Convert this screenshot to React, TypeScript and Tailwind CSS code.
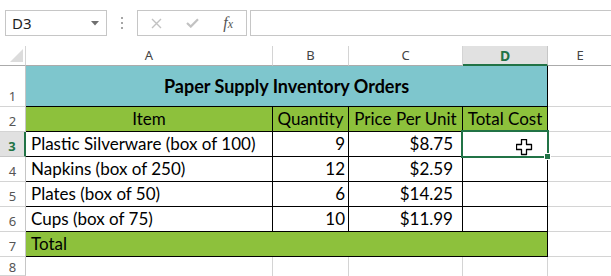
import React from "react";

const G = "border-[#d4d4d4]";

function RowHead({ n, h, pt, sel }: { n: string; h: string; pt: string; sel?: boolean }) {
  return (
    <div
      className={
        "box-border flex w-[26px] shrink-0 items-start justify-center border-b font-['Noto_Sans',sans-serif] text-[13px] leading-[14px] " +
        h +
        " " +
        pt +
        (sel
          ? " border-r-2 border-r-[#217346] border-b-[#c6c6c6] bg-[#e1e1e1] font-bold text-[#217346]"
          : " border-r border-r-[#c6c6c6] border-b-[#d4d4d4] text-[#555]")
      }
    >
      {n}
    </div>
  );
}

function DataRow({
  n,
  item,
  qty,
  price,
  sel,
}: {
  n: string;
  item: string;
  qty: string;
  price: string;
  sel?: boolean;
}) {
  return (
    <div className="flex h-[25px]">
      <RowHead n={n} h="h-[25px]" pt="pt-[7px]" sel={sel} />
      <div className="box-border flex w-[247px] shrink-0 items-end border-r border-b border-black pl-[5px] pb-[1px] text-[17px] leading-[22px]">
        {item}
      </div>
      <div className="box-border flex w-[76px] shrink-0 items-end justify-end border-r border-b border-black pr-[3px] pb-[1px] text-[17px] leading-[22px]">
        {qty}
      </div>
      <div className="box-border flex w-[114px] shrink-0 items-end justify-end border-r border-b border-black pr-[9px] pb-[1px] text-[17px] leading-[22px]">
        {price}
      </div>
      <div className="box-border w-[85px] shrink-0 border-r border-b border-black" />
      <div className={"box-border flex-1 border-b " + G} />
    </div>
  );
}

export default function App() {
  return (
    <div className="relative h-[276px] w-[611px] overflow-hidden bg-white font-['Lato',sans-serif] text-black">
      {/* Toolbar */}
      <div className="flex h-[46px] items-start pt-[10px] pl-[5px]">
        <div className="box-border flex h-[26px] w-[102px] shrink-0 items-center justify-between border border-[#c6c6c6] pl-[6px] pr-[7px]">
          <span className="font-['Noto_Sans',sans-serif] text-[15px] leading-none text-[#1e1e1e]">D3</span>
          <svg width="8" height="5" viewBox="0 0 8 5">
            <polygon points="0,0 8,0 4,4.5" fill="#6f6f6f" />
          </svg>
        </div>
        <div className="ml-[13px] flex h-[26px] w-[3px] shrink-0 flex-col items-center justify-center gap-[3px]">
          <div className="h-[2px] w-[2px] bg-[#a6a6a6]" />
          <div className="h-[2px] w-[2px] bg-[#a6a6a6]" />
          <div className="h-[2px] w-[2px] bg-[#a6a6a6]" />
        </div>
        <div className="ml-[14px] box-border flex h-[26px] w-[110px] shrink-0 items-center border border-[#c6c6c6] pl-[1px]">
          <div className="flex w-[36px] justify-center">
            <svg width="11" height="11" viewBox="0 0 11 11">
              <path d="M1 1 L10 10 M10 1 L1 10" stroke="#c2c2c2" strokeWidth="1.4" />
            </svg>
          </div>
          <div className="flex w-[36px] justify-center">
            <svg width="13" height="10" viewBox="0 0 13 10">
              <path d="M1 5 L4.8 8.6 L12 1.2" stroke="#c2c2c2" strokeWidth="2.2" fill="none" />
            </svg>
          </div>
          <div className="flex w-[36px] justify-center">
            <span className="font-['Liberation_Serif',serif] text-[16px] italic leading-none text-[#555]">
              f<span className="text-[12px]">x</span>
            </span>
          </div>
        </div>
        <div className="ml-[3px] box-border h-[26px] w-[400px] shrink-0 border border-[#c6c6c6]" />
      </div>

      {/* Column headers */}
      <div className="flex h-[20px] font-['Noto_Sans',sans-serif] text-[13px] text-[#444]">
        <div className="relative box-border h-[20px] w-[26px] shrink-0 border-r border-b border-r-[#d4d4d4] border-b-[#ababab]">
          <svg className="absolute left-[10px] top-[3px]" width="13" height="13" viewBox="0 0 13 13">
            <polygon points="13,0 13,13 0,13" fill="#dcdcdc" />
          </svg>
        </div>
        <div className="box-border flex h-[20px] w-[247px] shrink-0 items-center justify-center border-r border-b border-r-[#d4d4d4] border-b-[#ababab]">
          A
        </div>
        <div className="box-border flex h-[20px] w-[76px] shrink-0 items-center justify-center border-r border-b border-r-[#d4d4d4] border-b-[#ababab]">
          B
        </div>
        <div className="box-border flex h-[20px] w-[114px] shrink-0 items-center justify-center border-r border-b border-r-[#d4d4d4] border-b-[#ababab]">
          C
        </div>
        <div className="box-border flex h-[20px] w-[85px] shrink-0 items-center justify-center border-r border-b-2 border-r-[#c6c6c6] border-b-[#217346] bg-[#e1e1e1] text-[14px] font-bold text-[#217346]">
          D
        </div>
        <div className="box-border flex h-[20px] w-[64px] shrink-0 items-center justify-center border-b border-b-[#ababab]">
          E
        </div>
      </div>

      {/* Row 1 */}
      <div className="flex h-[41px]">
        <RowHead n="1" h="h-[41px]" pt="pt-[23px]" />
        <div className="box-border flex w-[522px] shrink-0 items-center justify-center border-r border-b border-black bg-[#7ec6cd] pt-[1px] text-[18px] font-bold">
          Paper Supply Inventory Orders
        </div>
        <div className={"box-border flex-1 border-b " + G} />
      </div>

      {/* Row 2 */}
      <div className="flex h-[25px]">
        <RowHead n="2" h="h-[25px]" pt="pt-[7px]" />
        <div className="box-border flex w-[247px] shrink-0 items-end justify-center border-r border-b border-black bg-[#8dc13c] pb-[1px] text-[17px] leading-[22px]">
          Item
        </div>
        <div className="box-border flex w-[76px] shrink-0 items-end justify-center border-r border-b border-black bg-[#8dc13c] pb-[1px] text-[17px] leading-[22px]">
          Quantity
        </div>
        <div className="box-border flex w-[114px] shrink-0 items-end justify-center border-r border-b border-black bg-[#8dc13c] pb-[1px] text-[17px] leading-[22px]">
          Price Per Unit
        </div>
        <div className="box-border flex w-[85px] shrink-0 items-end justify-center border-r border-b border-black bg-[#8dc13c] pb-[1px] text-[17px] leading-[22px]">
          Total Cost
        </div>
        <div className={"box-border flex-1 border-b " + G} />
      </div>

      <DataRow n="3" item="Plastic Silverware (box of 100)" qty="9" price="$8.75" sel />
      <DataRow n="4" item="Napkins (box of 250)" qty="12" price="$2.59" />
      <DataRow n="5" item="Plates (box of 50)" qty="6" price="$14.25" />
      <DataRow n="6" item="Cups (box of 75)" qty="10" price="$11.99" />

      {/* Row 7 */}
      <div className="flex h-[25px]">
        <RowHead n="7" h="h-[25px]" pt="pt-[7px]" />
        <div className="box-border flex w-[522px] shrink-0 items-end border-r border-b border-black bg-[#8dc13c] pl-[5px] pb-[1px] text-[17px] leading-[22px]">
          Total
        </div>
        <div className={"box-border flex-1 border-b " + G} />
      </div>

      {/* Row 8 */}
      <div className="flex h-[19px]">
        <RowHead n="8" h="h-[19px]" pt="pt-[3px]" />
        <div className={"box-border w-[247px] shrink-0 border-r " + G} />
        <div className={"box-border w-[76px] shrink-0 border-r " + G} />
        <div className={"box-border w-[114px] shrink-0 border-r " + G} />
        <div className={"box-border w-[85px] shrink-0 border-r " + G} />
        <div className="flex-1" />
      </div>

      {/* Selection */}
      <div className="pointer-events-none absolute left-[461px] top-[130px] box-border h-[28px] w-[88px] border-2 border-[#217346]" />
      <div className="absolute left-[544px] top-[153px] box-border h-[7px] w-[7px] border border-white bg-[#217346]" />

      {/* Cursor */}
      <svg className="absolute left-[516px] top-[139px]" width="17" height="17" viewBox="0 0 17 17">
        <path
          d="M5.5 0.5 H10.5 V5.5 H15.5 V10.5 H10.5 V15.5 H5.5 V10.5 H0.5 V5.5 H5.5 Z"
          fill="white"
          stroke="black"
          strokeWidth="1.3"
          strokeLinejoin="round"
        />
      </svg>
    </div>
  );
}
